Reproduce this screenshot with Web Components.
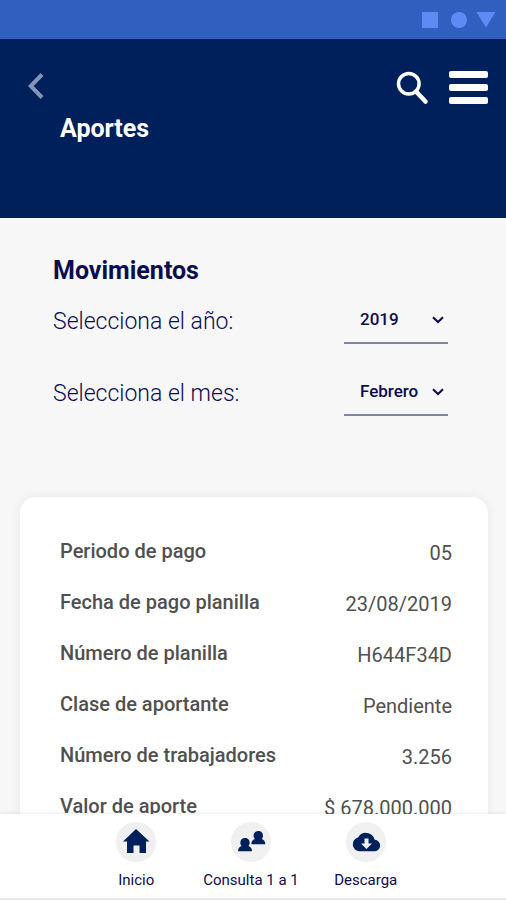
<!DOCTYPE html>
<html lang="es">
<head>
<meta charset="utf-8">
<meta name="viewport" content="width=device-width, initial-scale=1">
<title>Aportes</title>
<style>
  body {
    margin: 0;
    min-height: 100vh;
    background-color: #f7f7f7;
    font-family: Roboto, 'Liberation Sans', sans-serif;
    color: #0b0b4f;
  }
</style>
</head>
<body>
<aportes-page>
  <status-bar slot="top"></status-bar>
  <page-header slot="top">Aportes</page-header>
  <movement-filter>
    <span slot="title">Movimientos</span>
    <select-field label="Selecciona el año:" options="2019,2018,2017"></select-field>
    <select-field label="Selecciona el mes:" options="Febrero,Marzo,Abril"></select-field>
  </movement-filter>
  <detail-card>
    <detail-row label="Periodo de pago">05</detail-row>
    <detail-row label="Fecha de pago planilla">23/08/2019</detail-row>
    <detail-row label="Número de planilla">H644F34D</detail-row>
    <detail-row label="Clase de aportante">Pendiente</detail-row>
    <detail-row label="Número de trabajadores">3.256</detail-row>
    <detail-row label="Valor de aporte">$ 678.000.000</detail-row>
  </detail-card>
  <bottom-nav slot="bottom">
    <nav-item icon="home">Inicio</nav-item>
    <nav-item icon="people">Consulta 1 a 1</nav-item>
    <nav-item icon="cloud">Descarga</nav-item>
  </bottom-nav>
</aportes-page>

<script>
class BaseElement extends HTMLElement {
  constructor() {
    super();
    this.shadow = this.attachShadow({ mode: 'open' });
  }

  connectedCallback() {
    const template = document.createElement('template');
    template.innerHTML = this.render();
    this.shadow.replaceChildren(template.content.cloneNode(true));
  }
}

class AportesPage extends BaseElement {
  render() {
    return `
      <style>
        :host {
          display: flex;
          flex-direction: column;
          height: 100vh;
          overflow: hidden;
        }
        main {
          flex: 1;
          min-height: 0;
          overflow: hidden;
        }
      </style>
      <slot name="top"></slot>
      <main><slot></slot></main>
      <slot name="bottom"></slot>
    `;
  }
}

class StatusBar extends BaseElement {
  render() {
    return `
      <style>
        :host {
          display: flex;
          flex: none;
          justify-content: flex-end;
          align-items: center;
          height: 39px;
          padding-right: 10px;
          background-color: #305fc0;
        }
        svg { display: block; fill: #5c8bf6; }
      </style>
      <svg width="74" height="16" viewBox="0 0 74 16" aria-hidden="true">
        <rect x="0" y="0" width="16" height="16"/>
        <circle cx="37" cy="8" r="8"/>
        <path d="M54.500 0h19l-9.500 15.500z"/>
      </svg>
    `;
  }
}

class PageHeader extends BaseElement {
  render() {
    return `
      <style>
        :host {
          display: block;
          flex: none;
          height: 147px;
          padding: 32px 18px 0 28px;
          background-color: #00205b;
          color: #fff;
        }
        .bar {
          display: flex;
          align-items: flex-start;
          gap: 20px;
          height: 34px;
        }
        button {
          padding: 0;
          border: none;
          background: none;
          color: inherit;
        }
        .back { margin-right: auto; }
        svg { display: block; }
        h1 {
          margin: 8px 0 0 32px;
          font-size: 25px;
          line-height: 32px;
          font-weight: 700;
        }
      </style>
      <div class="bar">
        <button class="back" aria-label="Volver">
          <svg width="16" height="30" viewBox="0 0 16 30" fill="none" stroke="#8294b8" stroke-width="4">
            <path d="M14 3.500 2.800 15 14 26.500"/>
          </svg>
        </button>
        <button aria-label="Buscar">
          <svg width="33" height="34" viewBox="0 0 33 34" fill="none" stroke="#fff">
            <circle cx="12.800" cy="12.800" r="10.300" stroke-width="3.500"/>
            <path d="M20 20.500 29.500 30.500" stroke-width="4.500" stroke-linecap="round"/>
          </svg>
        </button>
        <button aria-label="Menú">
          <svg width="39" height="34" viewBox="0 0 39 34" fill="#fff">
            <rect y="0" width="39" height="7" rx="2"/>
            <rect y="13" width="39" height="7" rx="2"/>
            <rect y="26" width="39" height="7" rx="2"/>
          </svg>
        </button>
      </div>
      <h1><slot></slot></h1>
    `;
  }
}

class MovementFilter extends BaseElement {
  render() {
    return `
      <style>
        :host {
          display: block;
          padding: 36px 58px 81px 53px;
        }
        h2 {
          margin: 0 0 16px;
          font-size: 25px;
          line-height: 34px;
          font-weight: 700;
        }
        .fields {
          display: grid;
          gap: 32px;
        }
      </style>
      <h2><slot name="title"></slot></h2>
      <div class="fields"><slot></slot></div>
    `;
  }
}

class SelectField extends BaseElement {
  render() {
    const options = this.getAttribute('options')
      .split(',')
      .map((text) => `<option>${text}</option>`)
      .join('');
    return `
      <style>
        :host {
          display: flex;
          justify-content: space-between;
          align-items: flex-start;
        }
        label {
          font-size: 23px;
          line-height: 35px;
          font-weight: 300;
        }
        .box {
          display: grid;
          align-items: center;
          width: 104px;
          border-bottom: 2px solid #7e87a3;
        }
        select, svg { grid-area: 1 / 1; }
        select {
          appearance: none;
          width: 100%;
          height: 38px;
          padding: 0 0 9px 16px;
          border: none;
          background: none;
          font: 500 17px/28px Roboto, 'Liberation Sans', sans-serif;
          color: inherit;
        }
        svg {
          justify-self: end;
          margin: 0 4px 6px 0;
          pointer-events: none;
        }
      </style>
      <label for="field">${this.getAttribute('label')}</label>
      <div class="box">
        <select id="field">${options}</select>
        <svg width="12" height="8" viewBox="0 0 12 8" fill="none" stroke="#0b0b4f" stroke-width="2">
          <path d="M1 1.200 6 6l5-4.800"/>
        </svg>
      </div>
    `;
  }
}

class DetailCard extends BaseElement {
  render() {
    return `
      <style>
        :host {
          display: grid;
          gap: 20px;
          margin: 0 18px 0 20px;
          padding: 39px 36px 60px 40px;
          border-radius: 16px;
          background-color: #fff;
          box-shadow: 0 0 12px rgba(0, 40, 40, .07);
        }
      </style>
      <slot></slot>
    `;
  }
}

class DetailRow extends BaseElement {
  render() {
    return `
      <style>
        :host {
          display: flex;
          justify-content: space-between;
          font-size: 20px;
          line-height: 31px;
          color: #505050;
        }
        .label { font-weight: 500; }
        .value { padding-top: 2px; height: 29px; }
      </style>
      <span class="label">${this.getAttribute('label')}</span>
      <span class="value"><slot></slot></span>
    `;
  }
}

class BottomNav extends BaseElement {
  render() {
    return `
      <style>
        :host {
          display: block;
          flex: none;
          position: relative;
          background-color: #fff;
          border-bottom: 2px solid #e9e9e9;
          box-shadow: 0 -1px 3px rgba(0, 0, 0, .08);
        }
        nav {
          display: flex;
          justify-content: center;
          gap: 31px;
          padding: 8px 4px 7px 0;
        }
      </style>
      <nav><slot></slot></nav>
    `;
  }
}

const icons = {
  home: '<path d="M20 7 33.500 19.500h-3.500v11.500h-6.500v-7.500h-6v7.500h-6.500V19.500H7z"/>',
  people: `
    <path d="M14 16c2.800 0 4.700 2 4.700 4.600 0 1.500-.5 2.500-1.200 3.400 2 .8 3.500 2.200 3.500 5.200H7c0-3 1.500-4.400 3.500-5.200-.7-.9-1.200-1.900-1.200-3.400C9.300 18 11.200 16 14 16z"/>
    <path d="M27.300 9c2.800 0 4.700 2 4.700 4.600 0 1.500-.5 2.500-1.200 3.400 2 .8 3.500 2.200 3.500 5.200H20.300c0-3 1.500-4.400 3.500-5.200-.7-.9-1.200-1.900-1.200-3.400C22.600 11 24.500 9 27.300 9z"/>`,
  cloud: `
    <path fill-rule="evenodd" d="M28.700 17.800A9 9 0 0 0 12 15.600 6.900 6.900 0 0 0 13.500 29.200h14.700a5.700 5.700 0 0 0 .5-11.400zM26 21.500l-5.500 5.500-5.500-5.500h3.500v-5h4v5z"/>`
};

class NavItem extends BaseElement {
  render() {
    return `
      <style>
        :host { display: block; min-width: 72px; }
        a {
          display: flex;
          flex-direction: column;
          align-items: center;
          gap: 8px;
          font-size: 15px;
          line-height: 21px;
          color: inherit;
          text-decoration: none;
        }
        svg {
          display: block;
          border-radius: 50%;
          background-color: #f0f0f0;
          fill: #00205b;
        }
      </style>
      <a href="#">
        <svg width="40" height="40" viewBox="0 0 40 40" aria-hidden="true">${icons[this.getAttribute('icon')]}</svg>
        <span><slot></slot></span>
      </a>
    `;
  }
}

customElements.define('aportes-page', AportesPage);
customElements.define('status-bar', StatusBar);
customElements.define('page-header', PageHeader);
customElements.define('movement-filter', MovementFilter);
customElements.define('select-field', SelectField);
customElements.define('detail-card', DetailCard);
customElements.define('detail-row', DetailRow);
customElements.define('bottom-nav', BottomNav);
customElements.define('nav-item', NavItem);
</script>
</body>
</html>
